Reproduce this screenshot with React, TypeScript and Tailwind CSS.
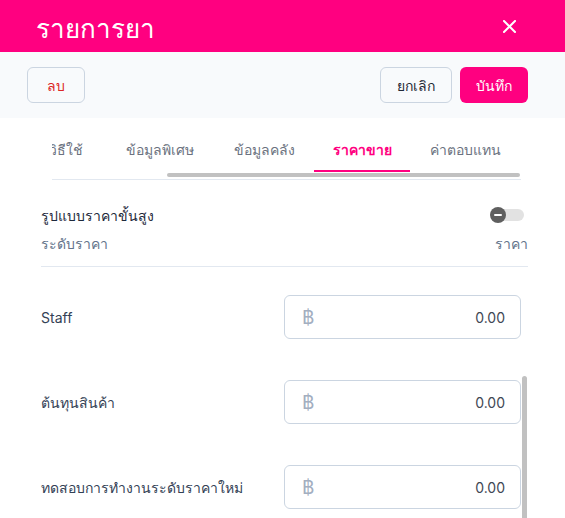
import React from "react";

const tabs = [
  { label: "ข้อมูลทั่วไป", w: "w-[127px]" },
  { label: "วิธีใช้", w: "w-[80px]" },
  { label: "ข้อมูลพิเศษ", w: "w-[108px]" },
  { label: "ข้อมูลคลัง", w: "w-[100px]" },
  { label: "ราคาขาย", w: "w-[96px]", active: true },
  { label: "ค่าตอบแทน", w: "w-[110px]" },
];

const rows = ["Staff", "ต้นทุนสินค้า", "ทดสอบการทำงานระดับราคาใหม่"];

function PriceInput() {
  return (
    <div className="w-[237px] h-[44px] rounded-md border border-[#cbd5e1] bg-white flex items-center pl-[17px] pr-[15px]">
      <span className="text-[19px] leading-none text-[#a3aec0]">฿</span>
      <span className="ml-auto text-[14px] text-[#3f4754]">0.00</span>
    </div>
  );
}

export default function App() {
  return (
    <div className="relative w-[565px] h-[518px] overflow-hidden bg-white font-['Inter',_'Noto_Sans',_sans-serif]">
      <header className="h-[52px] bg-[#ff0080] flex items-center justify-between pl-[36px] pr-[49px]">
        <h1 className="text-white text-[26px] leading-none font-medium mt-[5px]">รายการยา</h1>
        <svg width="13" height="13" viewBox="0 0 13 13" className="text-white">
          <path d="M1 1 L12 12 M12 1 L1 12" stroke="currentColor" strokeWidth="2" strokeLinecap="square" />
        </svg>
      </header>

      <div className="h-[66px] bg-[#f8fafc] flex items-center justify-between pl-[27px] pr-[37px]">
        <button className="h-[36px] w-[58px] rounded-md border border-[#cbd5e1] bg-[#f8fafc] text-[14px] text-[#dc2626]">
          ลบ
        </button>
        <div className="flex gap-[8px]">
          <button className="h-[36px] w-[72px] rounded-md border border-[#cbd5e1] bg-[#f8fafc] text-[14px] text-[#1f2937]">
            ยกเลิก
          </button>
          <button className="h-[36px] w-[68px] rounded-md bg-[#ff0080] text-[14px] text-white font-medium">
            บันทึก
          </button>
        </div>
      </div>

      <div className="ml-[52px] w-[469px] mt-[11px] border-b border-[#e2e8f0] overflow-hidden">
        <div className="flex -ml-[153px]">
          {tabs.map((t) => (
            <div
              key={t.label}
              className={`${t.w} shrink-0 h-[43px] flex items-center justify-center border-b-2 text-[14px] ${
                t.active ? "border-[#ff0080] text-[#ff0080] font-semibold" : "border-transparent text-[#6b7280] font-medium"
              }`}
            >
              {t.label}
            </div>
          ))}
        </div>
        <div className="h-[4px] mt-[1px] mb-[2px]">
          <div className="ml-[115px] w-[353px] h-[4px] rounded-full bg-[#c1c1c1]" />
        </div>
      </div>

      <div className="pl-[41px] pr-[37px]">
        <div className="mt-[23px] h-[24px] flex items-center justify-between">
          <span className="text-[14px] text-[#1e293b]">รูปแบบราคาขั้นสูง</span>
          <div className="relative w-[34px] h-[16px] mr-[4px]">
            <div className="absolute left-[3px] right-0 top-[2px] h-[12px] rounded-full bg-[#e2e2e2]" />
            <div className="absolute left-0 top-0 w-[16px] h-[16px] rounded-full bg-[#5f5f5f] flex items-center justify-center">
              <div className="w-[8px] h-[2px] bg-white rounded-full" />
            </div>
          </div>
        </div>
        <div className="mt-[6px] h-[20px] flex items-center justify-between text-[14px] text-[#64748b]">
          <span>ระดับราคา</span>
          <span>ราคา</span>
        </div>
        <div className="mt-[13px] h-px bg-[#e2e8f0]" />
      </div>

      <div className="pl-[41px] pr-[44px] mt-[28px] flex flex-col gap-[41px]">
        {rows.map((r) => (
          <div key={r} className="flex items-center justify-between">
            <span className="text-[14px] text-[#334155]">{r}</span>
            <PriceInput />
          </div>
        ))}
      </div>

      <div className="absolute left-[522px] top-[376px] w-[5px] h-[170px] rounded-full bg-[#c1c1c1]" />
    </div>
  );
}
